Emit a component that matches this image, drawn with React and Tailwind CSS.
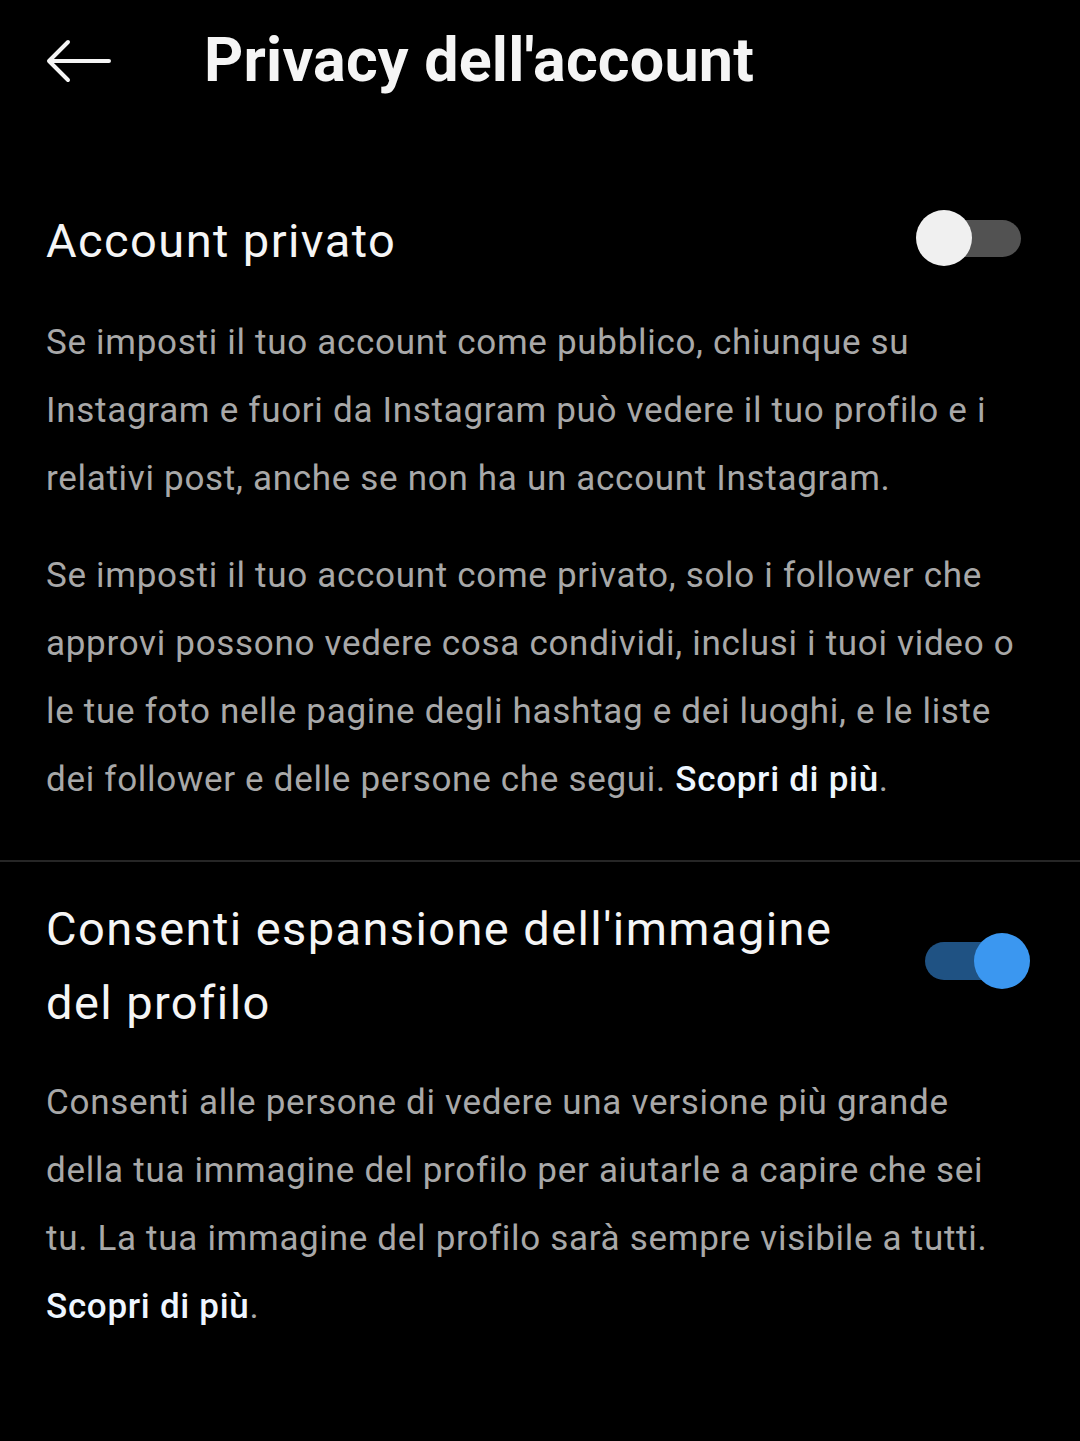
import React from "react";

function Toggle({ on }) {
  return (
    <div className="relative w-[105px] h-[58px] flex items-center shrink-0">
      <div
        className={
          on
            ? "absolute left-0 right-[20px] h-[38px] rounded-full bg-[#1f5283]"
            : "absolute left-[12px] right-0 h-[37px] rounded-full bg-[#525252]"
        }
      />
      <div
        className={
          on
            ? "absolute right-0 w-[56px] h-[56px] rounded-full bg-[#3b97f0]"
            : "absolute left-0 w-[56px] h-[56px] rounded-full bg-[#f0f0f0]"
        }
      />
    </div>
  );
}

function Link() {
  return (
    <>
      <span className="font-medium text-[#eef6ff]">Scopri di più</span>.
    </>
  );
}

export default function App() {
  return (
    <div
      className="w-[1080px] h-[1441px] bg-black text-[#f5f5f5] overflow-hidden"
      style={{ fontFamily: "Roboto, 'Noto Sans', sans-serif" }}
    >
      {/* top bar */}
      <header className="flex items-center h-[120px] pl-[46px]">
        <svg width="66" height="44" viewBox="0 0 66 44" fill="none" className="mt-[2px]">
          <path
            d="M63 22H4M22 3L3 22L22 41"
            stroke="#f5f5f5"
            strokeWidth="4"
            strokeLinecap="round"
            strokeLinejoin="round"
          />
        </svg>
        <h1 className="ml-[92px] text-[61px] font-bold tracking-[0.2px] leading-none">
          Privacy dell'account
        </h1>
      </header>

      {/* private account */}
      <section className="pl-[46px] pr-[59px] pt-[86px]">
        <div className="flex items-center justify-between">
          <h2 className="text-[47px] leading-[70px] tracking-[0.03em]">Account privato</h2>
          <div className="-mt-[6px]">
            <Toggle on={false} />
          </div>
        </div>
        <div className="mt-[33px] text-[35px] leading-[68px] tracking-[0.02em] text-[#a8a8a8]">
          <p>
            Se imposti il tuo account come pubblico, chiunque su Instagram e fuori da Instagram può
            vedere il tuo profilo e i relativi post, anche se non ha un account Instagram.
          </p>
          <p className="mt-[29px]">
            Se imposti il tuo account come privato, solo i follower che approvi possono vedere cosa
            condividi, inclusi i tuoi video o le tue foto nelle pagine degli hashtag e dei luoghi, e
            le liste dei follower e delle persone che segui. <Link />
          </p>
        </div>
      </section>

      <div className="mt-[46px] h-[2px] bg-[#262626]" />

      {/* profile picture expansion */}
      <section className="pl-[46px] pr-[50px] pt-[30px]">
        <div className="flex items-center justify-between">
          <h2 className="text-[47px] leading-[74px] tracking-[0.03em] w-[850px]">
            Consenti espansione dell'immagine del profilo
          </h2>
          <div className="-mt-[10px]">
            <Toggle on />
          </div>
        </div>
        <p className="mt-[29px] text-[35px] leading-[68px] tracking-[0.02em] text-[#a8a8a8] pr-[6px]">
          Consenti alle persone di vedere una versione più grande della tua immagine del profilo per
          aiutarle a capire che sei tu. La tua immagine del profilo sarà sempre visibile a tutti.{" "}
          <Link />
        </p>
      </section>
    </div>
  );
}
